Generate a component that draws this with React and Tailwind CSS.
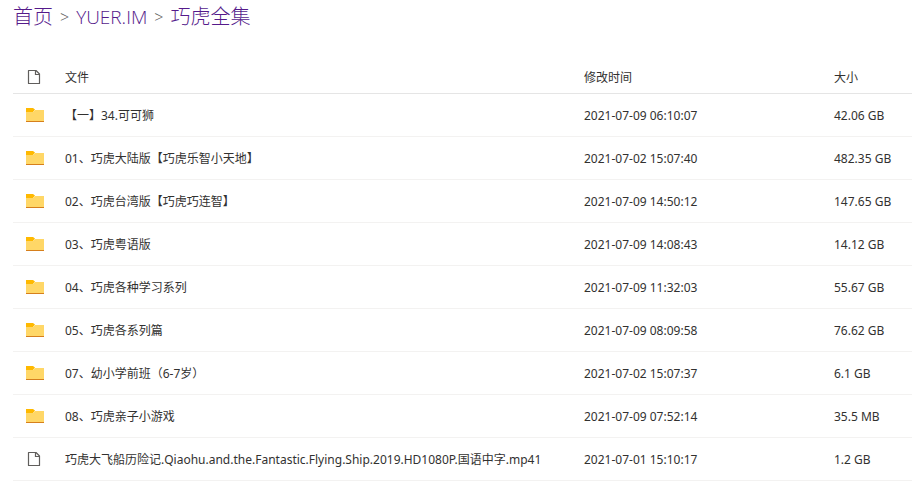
import React from 'react';

const files = [
    { name: '【一】34.可可狮', time: '2021-07-09 06:10:07', size: '42.06 GB', folder: true },
    { name: '01、巧虎大陆版【巧虎乐智小天地】', time: '2021-07-02 15:07:40', size: '482.35 GB', folder: true },
    { name: '02、巧虎台湾版【巧虎巧连智】', time: '2021-07-09 14:50:12', size: '147.65 GB', folder: true },
    { name: '03、巧虎粤语版', time: '2021-07-09 14:08:43', size: '14.12 GB', folder: true },
    { name: '04、巧虎各种学习系列', time: '2021-07-09 11:32:03', size: '55.67 GB', folder: true },
    { name: '05、巧虎各系列篇', time: '2021-07-09 08:09:58', size: '76.62 GB', folder: true },
    { name: '07、幼小学前班（6-7岁）', time: '2021-07-02 15:07:37', size: '6.1 GB', folder: true },
    { name: '08、巧虎亲子小游戏', time: '2021-07-09 07:52:14', size: '35.5 MB', folder: true },
    { name: '巧虎大飞船历险记.Qiaohu.and.the.Fantastic.Flying.Ship.2019.HD1080P.国语中字.mp41', time: '2021-07-01 15:10:17', size: '1.2 GB', folder: false },
];

const FolderIcon = () => (
    <svg className="block" width="20" height="16" viewBox="0 0 20 16" aria-hidden="true">
        <path d="M1 1h7l2 1.5L8 5H1z" fill="#ffb900" />
        <path d="M1 5h7l2-2h9v11H1z" fill="#ffd767" />
        <path d="M1 14h18v1H1z" fill="#d67f1c" />
    </svg>
);

const FileIcon = () => (
    <svg className="block" width="20" height="16" viewBox="0 0 20 16" fill="none" stroke="#605e5c" strokeWidth="1.2" aria-hidden="true">
        <path d="M3.5 1.5h7.5l3.5 3.5v9.5h-11z" strokeLinejoin="round" />
        <path d="M10.5 1.5v4h4" />
    </svg>
);

const App = () => {
    return (
        <div className="bg-white pl-[13px] text-xs text-[#323130] font-['Noto_Sans','Noto_Sans_CJK_SC',sans-serif]">
            <nav className="flex h-[34px] items-center gap-[7px] text-xl font-light font-['Open_Sans','Noto_Sans_CJK_SC',sans-serif]">
                <a href="#home" className="text-[#551a8b]">首页</a>
                <span className="text-base text-[#605e5c]">&gt;</span>
                <a href="#yuer" className="text-[19px] text-[#551a8b]">YUER.IM</a>
                <span className="text-base text-[#605e5c]">&gt;</span>
                <a href="#qiaohu" className="text-[#551a8b]">巧虎全集</a>
            </nav>

            <table className="mt-[26px] w-full table-fixed border-separate border-spacing-0 text-left">
                <thead>
                    <tr className="h-[34px] [&>th]:border-b [&>th]:border-[#e5e5e5]">
                        <th className="w-10 pl-3" aria-label="类型"><FileIcon /></th>
                        <th className="px-3 pt-0.5 font-normal">文件</th>
                        <th className="w-[250px] px-3 pt-0.5 font-normal">修改时间</th>
                        <th className="w-[90px] px-3 pt-0.5 font-normal">大小</th>
                    </tr>
                </thead>
                <tbody>
                    {files.map((file) => (
                        <tr key={file.name} className="h-[43px] [&>td]:border-b [&>td]:border-[#f3f2f1]">
                            <td className="pl-3">{file.folder ? <FolderIcon /> : <FileIcon />}</td>
                            <td className="px-3 pt-0.5 whitespace-nowrap">{file.name}</td>
                            <td className="px-3 pt-0.5 whitespace-nowrap">{file.time}</td>
                            <td className="px-3 pt-0.5 whitespace-nowrap">{file.size}</td>
                        </tr>
                    ))}
                </tbody>
            </table>
        </div>
    );
};

export default App;
